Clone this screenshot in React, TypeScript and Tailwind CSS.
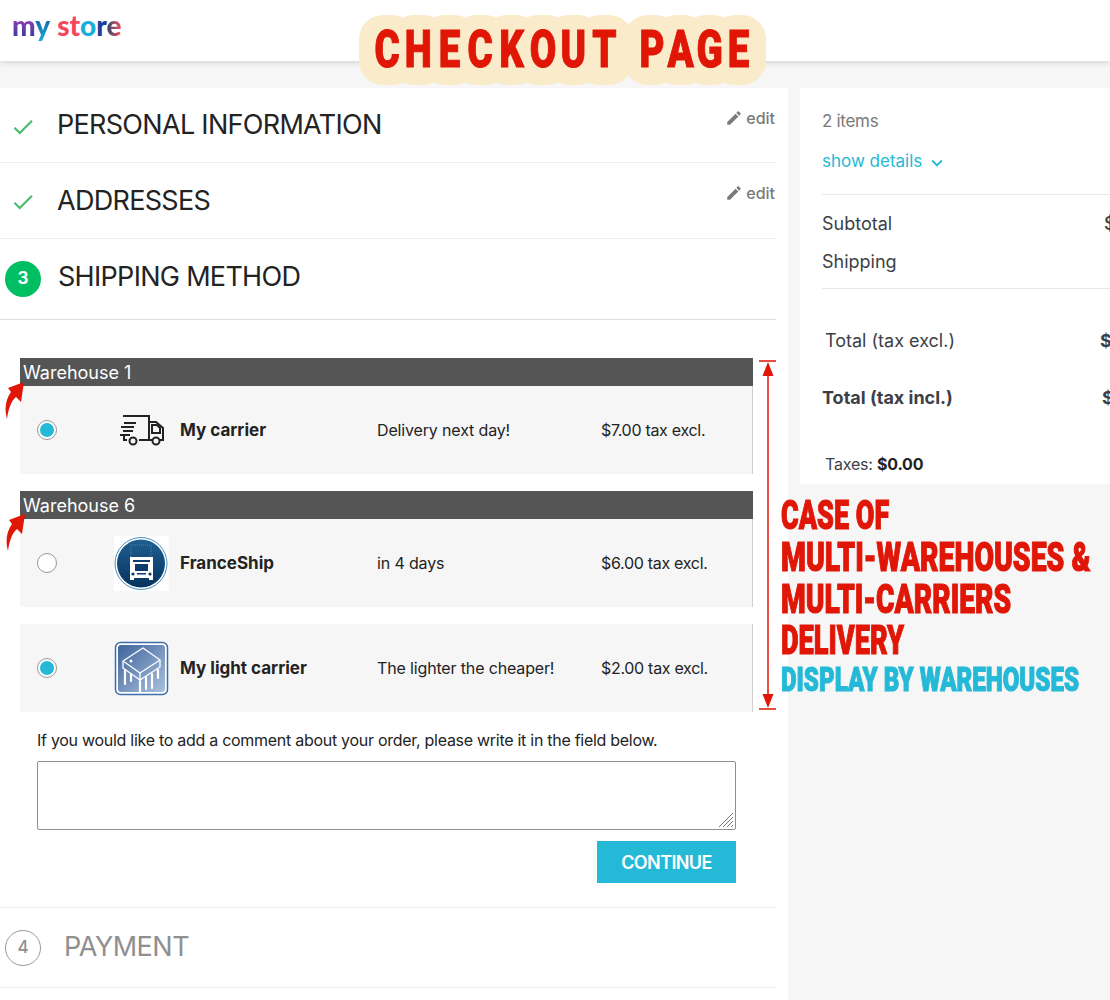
const CHECK = "M9 16.17L4.83 12l-1.42 1.41L9 19 21 7l-1.41-1.41z";
const PENCIL =
  "M3 17.25V21h3.75L17.81 9.94l-3.75-3.75L3 17.25zM20.71 7.04c.39-.39.39-1.02 0-1.41l-2.34-2.34c-.39-.39-1.02-.39-1.41 0l-1.83 1.83 3.75 3.75 1.83-1.83z";

function DoneStep({ title, height }: { title: string; height: string }) {
  return (
    <div className={`relative flex w-[776px] items-center border-b border-[#eeeeee] ${height}`}>
      <svg viewBox="0 0 24 24" className="ml-[10px] mt-[3px] h-[26px] w-[26px] fill-[#4cbb6c]">
        <path d={CHECK} />
      </svg>
      <h2 className="ml-[21px] mt-[1px] text-[27px] tracking-[-0.7px] text-[#232323]">{title}</h2>
      <div className="absolute right-[1px] top-[18px] flex items-center gap-[3px] text-[16px] font-medium text-[#7a7a7a]">
        <svg viewBox="0 0 24 24" className="h-[18px] w-[18px] fill-[#7a7a7a]">
          <path d={PENCIL} />
        </svg>
        edit
      </div>
    </div>
  );
}

function Radio({ checked }: { checked?: boolean }) {
  return (
    <div className="flex h-[20px] w-[20px] items-center justify-center rounded-full border border-[#979797] bg-white">
      {checked && <div className="h-[14px] w-[14px] rounded-full bg-[#24b9d7]" />}
    </div>
  );
}

function TruckIcon() {
  return (
    <svg viewBox="0 0 46 34" className="ml-[5px] h-[34px] w-[46px] fill-none stroke-[#222222] stroke-[2]">
      <path d="M4 3h26v24H20M8 27H5v-4" />
      <path d="M30 9h7l7 6v12h-3M30 27h3" />
      <path d="M33 12h5l3 3v5h-8z" />
      <circle cx="14" cy="28" r="3.5" />
      <circle cx="37" cy="28" r="3.5" />
      <path d="M5 10h12M2 14h13M4 18h10M1 22h10" />
    </svg>
  );
}

function FranceShipIcon() {
  return (
    <div className="flex h-[55px] w-[55px] items-center justify-center bg-white">
      <svg viewBox="0 0 55 55" className="h-[55px] w-[55px]">
        <defs>
          <linearGradient id="blue" x1="0" y1="0" x2="0" y2="1">
            <stop offset="0" stopColor="#1f5f92" />
            <stop offset="1" stopColor="#06335f" />
          </linearGradient>
        </defs>
        <circle cx="27" cy="27.5" r="26" fill="none" stroke="#4a8fb8" strokeWidth="1" />
        <circle cx="27" cy="27.5" r="24" fill="url(#blue)" />
        <rect x="17" y="9" width="20" height="13" fill="none" stroke="#5f8fb5" strokeWidth="0.7" strokeDasharray="1 1" />
        <path d="M16 21h23v23h-4v-2H20v2h-4z" fill="#fff" />
        <rect x="19" y="24" width="17" height="2" fill="#0b3c6b" />
        <rect x="21" y="28" width="13" height="7" fill="#0b3c6b" />
        <circle cx="19" cy="38" r="1.6" fill="#0b3c6b" />
        <circle cx="36" cy="38" r="1.6" fill="#0b3c6b" />
        <rect x="23" y="37" width="9" height="1.5" fill="#0b3c6b" />
      </svg>
    </div>
  );
}

function ChipIcon() {
  return (
    <svg viewBox="0 0 55 55" className="h-[55px] w-[55px]">
      <defs>
        <linearGradient id="chip" x1="0" y1="0" x2="1" y2="1">
          <stop offset="0" stopColor="#3f659c" />
          <stop offset="1" stopColor="#a9c0dd" />
        </linearGradient>
      </defs>
      <rect x="1.5" y="1.5" width="52" height="52" rx="5" fill="#fff" stroke="#3f6cab" strokeWidth="1.5" />
      <rect x="4" y="4" width="47" height="47" rx="3" fill="url(#chip)" />
      <g fill="none" stroke="#fff" strokeWidth="1.3" strokeLinejoin="round">
        <path d="M9 20L29 7l17 12-20 13z" />
        <path d="M9 20v7l17 12 20-13v-7M26 32v7" />
      </g>
      <circle cx="17" cy="20" r="1.5" fill="#fff" />
      <g stroke="#fff" strokeWidth="2.2" strokeLinecap="round">
        <path d="M11 29v14M17 33v7M26 40v11M32 36v12M38 33v14M44 29v8" />
      </g>
    </svg>
  );
}

function Carrier({
  icon,
  name,
  delay,
  price,
  checked,
}: {
  icon: React.ReactNode;
  name: string;
  delay: string;
  price: string;
  checked?: boolean;
}) {
  return (
    <div className="flex h-[88px] w-[733px] items-center border-r border-[#cfcfcf] bg-[#f6f6f6] text-[16px] text-[#232323]">
      <div className="ml-[17px] w-[77px]">
        <Radio checked={checked} />
      </div>
      <div className="flex w-[66px] justify-start">{icon}</div>
      <div className="w-[197px] pt-[2px] text-[17px] font-bold">{name}</div>
      <div className="w-[224px] tracking-[-0.15px]">{delay}</div>
      <div className="tracking-[-0.3px]">{price}</div>
    </div>
  );
}

function WarehouseBar({ label }: { label: string }) {
  return (
    <div className="flex h-[28px] w-[733px] items-center bg-[#555555] pl-[3px] text-[18px] text-white">
      {label}
    </div>
  );
}

function CurvedArrow({ className }: { className: string }) {
  return (
    <svg viewBox="0 0 20 38" className={`absolute h-[38px] w-[20px] fill-[#e01606] ${className}`}>
      <path d="M19 0L3 6l3 4C1 17-1 26 2 37c1-9 4-18 9-22l5 5z" />
    </svg>
  );
}

function SizeArrow() {
  return (
    <svg viewBox="0 0 18 350" className="absolute left-[759px] top-[360px] h-[350px] w-[18px]">
      <path d="M0 1h17M0 349h17" stroke="#e01606" strokeWidth="1.5" />
      <path d="M9 2l-5.5 14h11zM9 348l-5.5-14h11z" fill="#e01606" />
      <path d="M9 14v322" stroke="#e01606" strokeWidth="1.5" />
    </svg>
  );
}

function TitleLetter({ ch, width }: { ch: string; width: string }) {
  return (
    <span className={`relative flex h-[70px] items-center justify-center ${width}`}>
      <span className="absolute -inset-x-[13px] inset-y-0 -z-10 rounded-[24px] bg-[#faebca]" />
      <span className="scale-x-[0.74] font-[Roboto] text-[52px] font-black leading-[60px] text-[#e01606] [-webkit-text-stroke:1px_#e01606]">
        {ch}
      </span>
    </span>
  );
}

const IMPACT_TEXT =
  "absolute left-[781px] origin-left whitespace-nowrap font-[Roboto] font-black [-webkit-text-stroke:1.1px_currentColor]";

export default function App() {
  return (
    <div className="relative h-[1000px] w-full overflow-hidden bg-[#f6f6f6] font-[Inter,sans-serif]">
      {/* header */}
      <header className="h-[61px] bg-white shadow-[0_2px_6px_rgba(0,0,0,0.13)]">
        <div className="pl-[12px] pt-[6px] font-[Lato,sans-serif] text-[28px] font-black leading-[38px]">
          <span className="bg-gradient-to-b from-[#c22fc0] to-[#14389a] bg-clip-text text-transparent">m</span>
          <span className="bg-gradient-to-b from-[#1a3f9a] to-[#16afd9] bg-clip-text text-transparent">y</span>
          <span className="ml-[7px] text-[#f5475b]">st</span>
          <span className="text-[#16afd9]">o</span>
          <span className="text-[#1b3f9c]">r</span>
          <span className="bg-gradient-to-r from-[#123b66] to-[#f5475b] bg-clip-text text-transparent">e</span>
        </div>
      </header>

      <div className="mt-[27px] flex gap-[12px]">
        {/* checkout steps */}
        <main className="h-[912px] w-[788px] shrink-0 bg-white">
          <DoneStep title="PERSONAL INFORMATION" height="h-[75px]" />
          <DoneStep title="ADDRESSES" height="h-[76px]" />

          <div className="flex h-[81px] w-[776px] items-center border-b border-[#dddddd]">
            <div className="ml-[5px] flex h-[36px] w-[36px] items-center justify-center rounded-full bg-[#00bf63] text-[17px] font-bold text-white">
              3
            </div>
            <h2 className="mb-[3px] ml-[17px] text-[27px] tracking-[-0.7px] text-[#232323]">SHIPPING METHOD</h2>
          </div>

          <div className="ml-[20px] mt-[38px] flex flex-col">
            <WarehouseBar label="Warehouse 1" />
            <Carrier icon={<TruckIcon />} name="My carrier" delay="Delivery next day!" price="$7.00 tax excl." checked />
            <div className="h-[17px]" />
            <WarehouseBar label="Warehouse 6" />
            <Carrier icon={<FranceShipIcon />} name="FranceShip" delay="in 4 days" price="$6.00 tax excl." />
            <div className="h-[17px]" />
            <Carrier icon={<ChipIcon />} name="My light carrier" delay="The lighter the cheaper!" price="$2.00 tax excl." checked />
          </div>

          <p className="ml-[37px] mt-[18px] text-[16px] leading-[20px] tracking-[-0.28px] text-[#232323]">
            If you would like to add a comment about your order, please write it in the field below.
          </p>
          <div className="relative ml-[37px] mt-[11px] h-[69px] w-[699px]">
            <textarea className="block h-full w-full resize-none rounded-[2px] border border-[#8f8f99] bg-white" />
            <svg viewBox="0 0 16 16" className="pointer-events-none absolute bottom-[2px] right-[2px] h-[16px] w-[16px] stroke-[#777777] stroke-[1]">
              <path d="M1 15L15 1M5 15L15 5M9 15l6-6M13 15l2-2" />
            </svg>
          </div>
          <div className="mt-[11px] flex w-[736px] justify-end">
            <button className="flex h-[42px] w-[139px] items-center justify-center bg-[#24b9d7] text-[18px] font-semibold tracking-[-0.6px] text-white">
              CONTINUE
            </button>
          </div>

          <div className="mt-[24px] flex h-[81px] w-[776px] items-center border-y border-[#eeeeee]">
            <div className="ml-[5px] flex h-[36px] w-[36px] items-center justify-center rounded-full border border-[#999999] text-[17px] font-medium text-[#8f8f8f]">
              4
            </div>
            <h2 className="ml-[23px] text-[27px] tracking-[-0.5px] text-[#8f8f8f]">PAYMENT</h2>
          </div>
        </main>

        {/* order summary, runs off the right edge in the picture */}
        <aside className="h-[396px] flex-1 overflow-hidden bg-white pl-[22px] text-[18px] text-[#3d3f47]">
          <div className="pt-[21px] text-[17px] tracking-[-0.3px] text-[#7a7a7a]">2 items</div>
          <div className="mt-[14px] flex items-center gap-[4px] text-[17px] text-[#24b9d7]">
            show details
            <svg viewBox="0 0 24 24" className="mt-[3px] h-[22px] w-[22px] fill-[#24b9d7]">
              <path d="M16.59 8.59L12 13.17 7.41 8.59 6 10l6 6 6-6z" />
            </svg>
          </div>
          <div className="mt-[20px] border-t border-[#e8e8e8] pt-[17px]">
            <div className="flex whitespace-nowrap leading-[24px]">
              <span className="w-[282px] shrink-0">Subtotal</span>
              <span className="font-medium">$36.00</span>
            </div>
            <div className="mt-[14px] leading-[24px]">Shipping</div>
          </div>
          <div className="mt-[14px] border-t border-[#e8e8e8] pl-[3px] pt-[40px]">
            <div className="flex whitespace-nowrap leading-[24px]">
              <span className="w-[275px] shrink-0">Total (tax excl.)</span>
              <span className="font-bold">$36.00</span>
            </div>
          </div>
          <div className="mt-[33px] flex whitespace-nowrap font-bold leading-[24px]">
            <span className="w-[280px] shrink-0">Total (tax incl.)</span>
            <span>$36.00</span>
          </div>
          <div className="mt-[44px] pl-[3px] text-[16px] leading-[20px] tracking-[-0.2px]">
            Taxes: <span className="font-bold text-[#232323]">$0.00</span>
          </div>
        </aside>
      </div>

      {/* annotations painted over the page */}
      <h1 className="absolute left-[372px] top-[15px] isolate flex">
        <span className="flex">
          {"CHECKOUT".split("").map((ch, i) => (
            <TitleLetter key={i} ch={ch} width="w-[31px]" />
          ))}
        </span>
        <span className="ml-[17px] flex">
          {"PAGE".split("").map((ch, i) => (
            <TitleLetter key={i} ch={ch} width="w-[29px]" />
          ))}
        </span>
      </h1>
      <CurvedArrow className="left-[5px] top-[382px]" />
      <CurvedArrow className="left-[6px] top-[514px]" />
      <SizeArrow />
      <div className={`${IMPACT_TEXT} top-[498px] scale-x-[0.675] text-[40px] leading-[36px] text-[#e01606]`}>CASE OF</div>
      <div className={`${IMPACT_TEXT} top-[540px] scale-x-[0.71] text-[40px] leading-[36px] text-[#e01606]`}>MULTI-WAREHOUSES &amp;</div>
      <div className={`${IMPACT_TEXT} top-[582px] scale-x-[0.706] text-[40px] leading-[36px] text-[#e01606]`}>MULTI-CARRIERS</div>
      <div className={`${IMPACT_TEXT} top-[623px] scale-x-[0.68] text-[40px] leading-[36px] text-[#e01606]`}>DELIVERY</div>
      <div className={`${IMPACT_TEXT} top-[664px] scale-x-[0.73] text-[33px] leading-[32px] text-[#24b9d7]`}>DISPLAY BY WAREHOUSES</div>
    </div>
  );
}
